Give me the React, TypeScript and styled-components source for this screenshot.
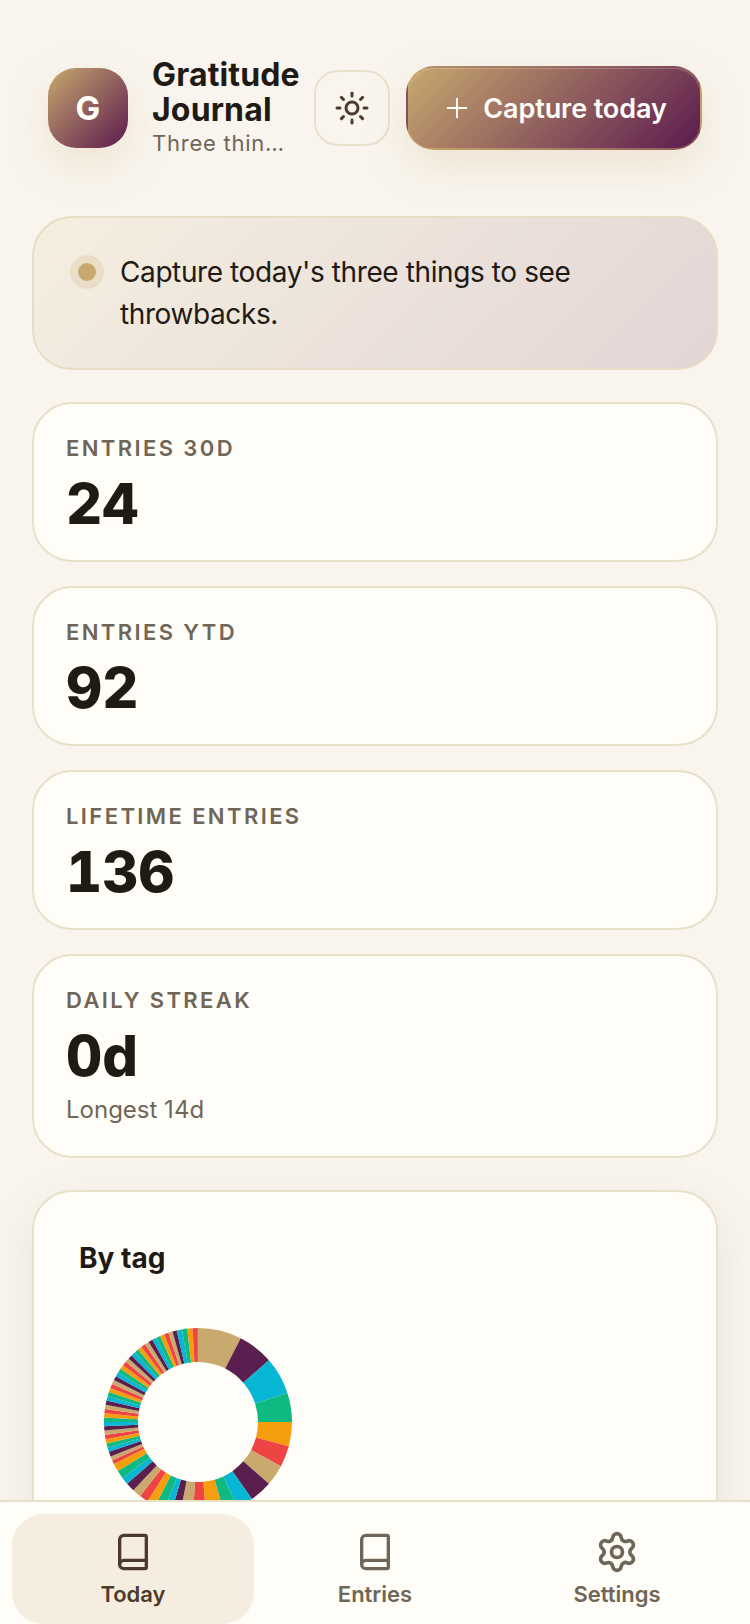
import * as React from 'react'
import styled, { createGlobalStyle } from 'styled-components'
import { Book, Plus, Settings, Sun } from 'lucide-react'

const GlobalStyle = createGlobalStyle`
  html, body {
    margin: 0;
    padding: 0;
    background: #f9f5ee;
    font-family: 'Inter', 'Liberation Sans', sans-serif;
    color: #1f1a14;
  }
  * { box-sizing: border-box; }
`

const Screen = styled.div`
  display: flex;
  flex-direction: column;
  width: 750px;
  height: 1624px;
  overflow: hidden;
`

const Main = styled.main`
  flex: 1;
  min-height: 0;
  overflow: hidden;
  padding: 0 32px;
`

const Header = styled.header`
  display: flex;
  align-items: center;
  gap: 16px;
  padding: 57px 16px;
`

const Avatar = styled.div`
  flex: none;
  display: flex;
  align-items: center;
  justify-content: center;
  width: 80px;
  height: 80px;
  margin-right: 8px;
  border-radius: 28px;
  background: linear-gradient(135deg, #c9a96e, #5b1a4f);
  box-shadow: 0 16px 40px rgba(201, 169, 110, 0.22);
  color: #fffdf7;
  font-size: 33px;
  font-weight: 700;
`

const TitleBlock = styled.div`
  flex: 1;
  min-width: 0;
`

const Title = styled.h1`
  margin: 0;
  font-size: 32px;
  line-height: 35px;
  font-weight: 700;
  letter-spacing: 0.15px;
`

const Subtitle = styled.div`
  font-size: 22px;
  line-height: 32px;
  color: #6f6657;
  letter-spacing: 0.75px;
  white-space: nowrap;
  overflow: hidden;
  text-overflow: ellipsis;
`

const ThemeButton = styled.button`
  flex: none;
  display: flex;
  align-items: center;
  justify-content: center;
  width: 76px;
  height: 76px;
  padding: 0;
  border: 2px solid #e8e0c9;
  border-radius: 24px;
  background: transparent;
  color: #4e3a2a;
`

const CaptureButton = styled.button`
  flex: none;
  display: flex;
  align-items: center;
  justify-content: center;
  gap: 10px;
  width: 296px;
  height: 84px;
  padding: 0;
  border: 2px solid rgba(201, 169, 110, 0.3);
  border-radius: 28px;
  background: linear-gradient(135deg, #c9a96e, #5b1a4f);
  box-shadow: 0 16px 40px rgba(201, 169, 110, 0.22), inset 0 1px 0 rgba(255, 255, 255, 0.2);
  color: #fffdf7;
  font-family: inherit;
  font-size: 27px;
  font-weight: 600;
  letter-spacing: -0.1px;
`

const Banner = styled.section`
  display: flex;
  align-items: flex-start;
  gap: 16px;
  padding: 33px 36px 33px;
  border: 2px solid #e8dcc4;
  border-radius: 40px;
  background: linear-gradient(135deg, #f5efe0, #e3d6d6);
  font-size: 28px;
  line-height: 42px;
  letter-spacing: -0.4px;
`

const BannerDot = styled.span`
  flex: none;
  width: 18px;
  height: 18px;
  margin: 12px 8px 0 8px;
  border-radius: 50%;
  background: #c9a96e;
  box-shadow: 0 0 0 8px rgba(201, 169, 110, 0.2);
`

const Stats = styled.div`
  display: flex;
  flex-direction: column;
  gap: 24px;
  margin-top: 32px;
`

const StatCard = styled.section`
  padding: 30px 32px 26px;
  border: 2px solid #e8e0c9;
  border-radius: 40px;
  background: #fffdf7;
`

const StatLabel = styled.div`
  font-size: 22px;
  line-height: 28px;
  font-weight: 600;
  letter-spacing: 2.4px;
  text-transform: uppercase;
  color: #6f6657;
`

const StatValue = styled.div`
  margin-top: 12px;
  font-size: 56px;
  line-height: 60px;
  font-weight: 800;
  font-variant-numeric: tabular-nums;
`

const StatHint = styled.div`
  margin: 8px 0 4px;
  font-size: 24px;
  line-height: 32px;
  color: #6f6657;
`

const ChartCard = styled.section`
  height: 420px;
  margin-top: 32px;
  padding: 48px 45px;
  border: 2px solid #e8e0c9;
  border-radius: 40px;
  background: #fffdf7;
  box-shadow: 0 16px 48px rgba(90, 70, 30, 0.1);
`

const ChartTitle = styled.h2`
  margin: 0;
  font-size: 28px;
  line-height: 36px;
  font-weight: 700;
`

const Donut = styled.svg`
  display: block;
  margin: 52px 0 0 25px;
`

const BottomNav = styled.nav`
  flex: none;
  position: relative;
  display: grid;
  grid-template-columns: repeat(3, 1fr);
  height: 124px;
  padding: 12px 12px 0;
  border-top: 2px solid #e8e0c9;
  background: #fffdf7;
`

const NavItem = styled.a<{ $active?: boolean }>`
  display: flex;
  flex-direction: column;
  align-items: center;
  gap: 5px;
  padding-top: 16px;
  border-radius: 32px;
  background: ${props => (props.$active ? '#f5eee0' : 'transparent')};
  color: ${props => (props.$active ? '#4e3a2a' : '#6f6657')};
  font-size: 22px;
  line-height: 30px;
  font-weight: 600;
`

const NavIcon = styled.span`
  display: flex;
  align-items: center;
  justify-content: center;
  height: 44px;
`

const COLORS = ['#c9a96e', '#5b1f4f', '#06b6d4', '#10b981', '#f59e0b', '#ef4444']

// degrees per tag, biggest first, the long tail is nearly flat
const SLICES = [
  27, 22, 23, 18, 15, 13, 13, 14, 10, 9, 11, 8, 8, 5.5, 4.5, 6,
  5.5, 5.5, 5.5, 5.5, 4.5, 5, 5, 2.5, 2.5, 3,
  ...Array<number>(36).fill(2.65),
  ...Array<number>(4).fill(3.25),
]

const wedge = (start: number, end: number, cx: number, cy: number, r0: number, r1: number) => {
  const pt = (a: number, r: number) => {
    const t = (a * Math.PI) / 180
    return `${(cx + r * Math.sin(t)).toFixed(2)} ${(cy - r * Math.cos(t)).toFixed(2)}`
  }
  return `M${pt(start, r1)}A${r1} ${r1} 0 0 1 ${pt(end, r1)}L${pt(end, r0)}A${r0} ${r0} 0 0 0 ${pt(start, r0)}Z`
}

const TagDonut = () => {
  let angle = 0
  return (
    <Donut width="188" height="188" viewBox="0 0 188 188">
      {SLICES.map((size, i) => {
        const d = wedge(angle, angle + size, 94, 94, 60, 94)
        angle += size
        return <path key={i} d={d} fill={COLORS[i % COLORS.length]} />
      })}
    </Donut>
  )
}

const STATS = [
  { label: 'Entries 30d', value: '24' },
  { label: 'Entries YTD', value: '92' },
  { label: 'Lifetime entries', value: '136' },
  { label: 'Daily streak', value: '0d', hint: 'Longest 14d' },
]

export default function App() {
  return (
    <Screen>
      <GlobalStyle />
      <Main>
        <Header>
          <Avatar>G</Avatar>
          <TitleBlock>
            <Title>Gratitude Journal</Title>
            <Subtitle>Three things a day</Subtitle>
          </TitleBlock>
          <ThemeButton aria-label="Toggle theme">
            <Sun size={36} strokeWidth={2} />
          </ThemeButton>
          <CaptureButton>
            <Plus size={32} strokeWidth={1.5} />
            Capture today
          </CaptureButton>
        </Header>
        <Banner>
          <BannerDot />
          <span>Capture today's three things to see throwbacks.</span>
        </Banner>
        <Stats>
          {STATS.map(stat => (
            <StatCard key={stat.label}>
              <StatLabel>{stat.label}</StatLabel>
              <StatValue>{stat.value}</StatValue>
              {stat.hint && <StatHint>{stat.hint}</StatHint>}
            </StatCard>
          ))}
        </Stats>
        <ChartCard>
          <ChartTitle>By tag</ChartTitle>
          <TagDonut />
        </ChartCard>
      </Main>
      <BottomNav>
        <NavItem $active>
          <NavIcon><Book size={40} strokeWidth={2} /></NavIcon>
          Today
        </NavItem>
        <NavItem>
          <NavIcon><Book size={40} strokeWidth={2} /></NavIcon>
          Entries
        </NavItem>
        <NavItem>
          <NavIcon><Settings size={44} strokeWidth={2} /></NavIcon>
          Settings
        </NavItem>
      </BottomNav>
    </Screen>
  )
}
